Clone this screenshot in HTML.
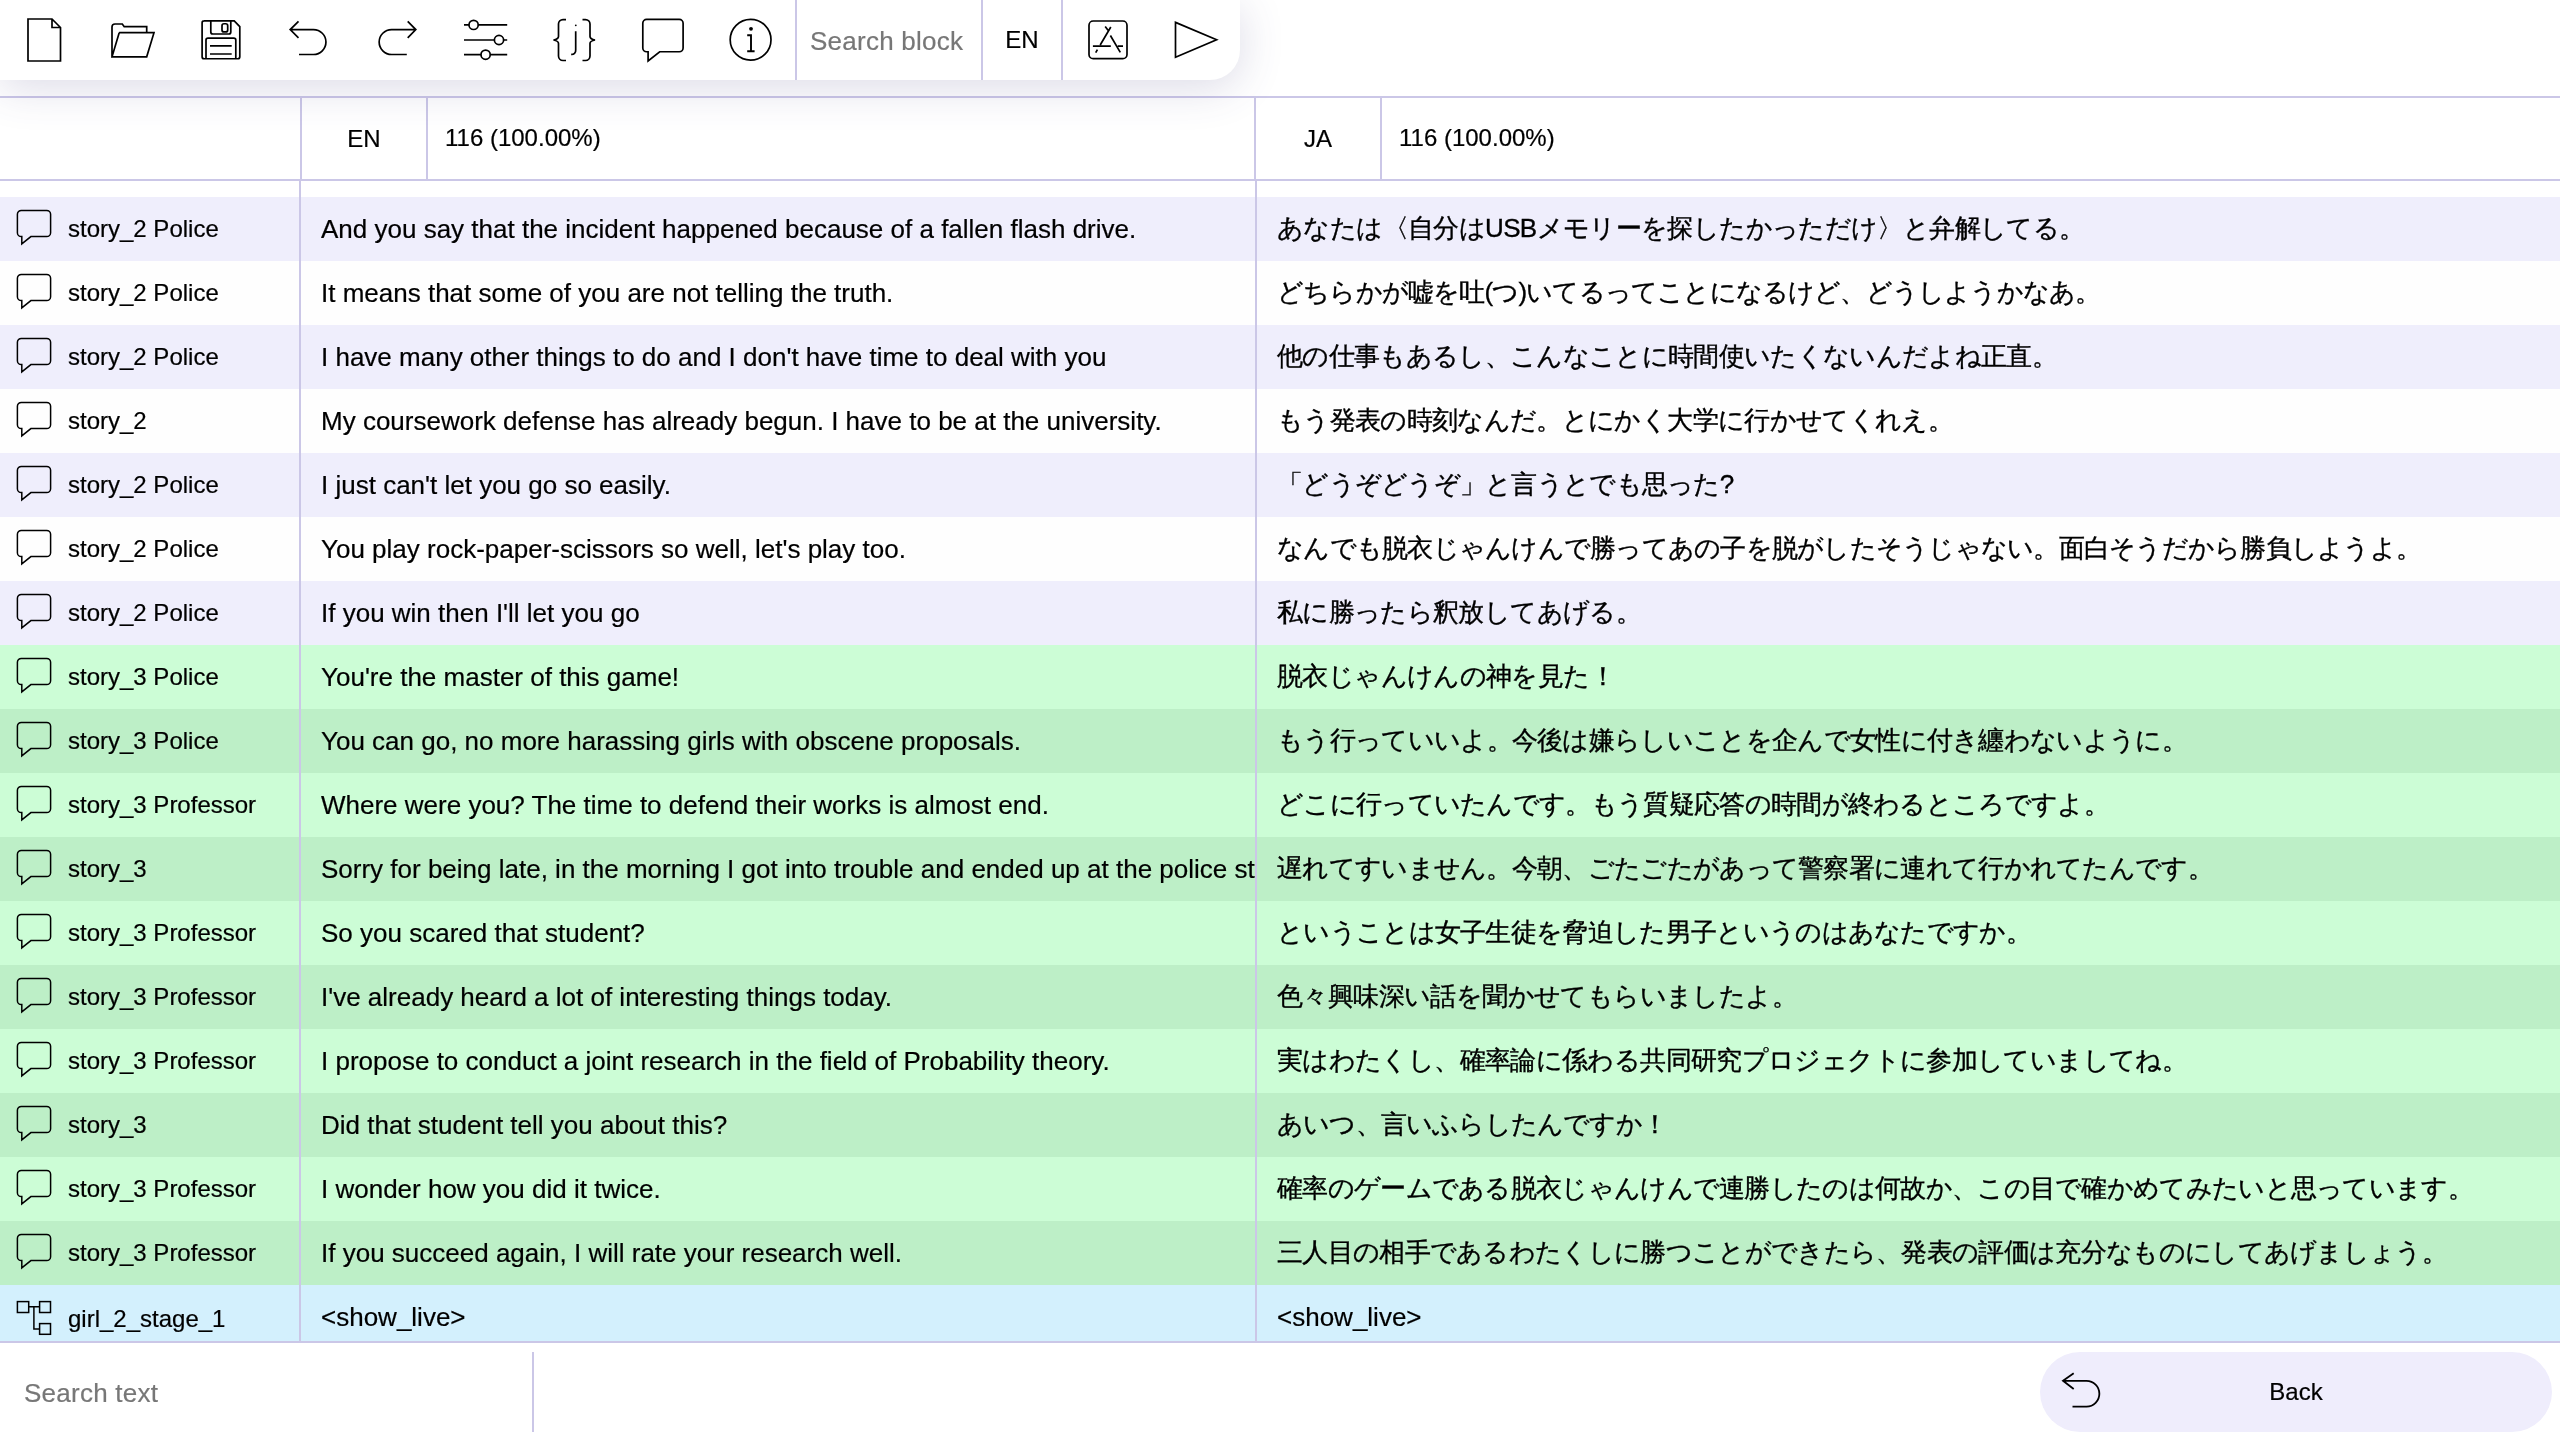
<!DOCTYPE html>
<html><head><meta charset="utf-8">
<style>
html,body{margin:0;padding:0}
body{will-change:transform;-webkit-text-stroke-width:0.2px;width:2560px;height:1440px;overflow:hidden;position:relative;background:#fff;font-family:"Liberation Sans",sans-serif;color:#000}
.a{position:absolute}
.hl{position:absolute;background:#cbc7e7}
#tb{position:absolute;left:0;top:0;width:1240px;height:80px;background:#fff;border-bottom-right-radius:30px;box-shadow:0 8px 44px rgba(70,62,125,0.19);z-index:5}
#tb svg{position:absolute;left:0;top:0}
.ph{color:#777;font-size:26px;white-space:nowrap;letter-spacing:0.25px}
#body{position:absolute;left:0;top:181px;width:2560px;height:1160px;overflow:hidden}
.row{position:absolute;left:0;width:2560px;height:64px}
.row .k{position:absolute;left:68px;top:0;line-height:64px;font-size:24px;white-space:nowrap}
.row .e{position:absolute;left:321px;top:0;width:934px;overflow:hidden;line-height:64px;font-size:26px;white-space:nowrap}
.row .j{position:absolute;left:1277px;top:-1px;-webkit-text-stroke-width:0.35px;line-height:64px;font-size:26px;white-space:nowrap}
.row svg{position:absolute;left:0;top:0}
.L{background:#efeefc}
.W{background:#fefefe}
.G1{background:#ccfdd6}
.G2{background:#bdefc7}
.B{background:#d3f0fd}
</style></head><body>

<!-- header lines -->
<div class="hl" style="left:0;top:96px;width:2560px;height:2px"></div>
<div class="hl" style="left:0;top:179px;width:2560px;height:2px"></div>
<div class="hl" style="left:300px;top:98px;width:2px;height:81px"></div>
<div class="hl" style="left:426px;top:98px;width:2px;height:81px"></div>
<div class="hl" style="left:1254px;top:98px;width:2px;height:81px"></div>
<div class="hl" style="left:1380px;top:98px;width:2px;height:81px"></div>
<div class="a" style="left:302px;top:98px;width:124px;line-height:81px;font-size:24px;text-align:center">EN</div>
<div class="a" style="left:445px;top:97px;line-height:81px;font-size:24px;white-space:nowrap">116 (100.00%)</div>
<div class="a" style="left:1256px;top:98px;width:124px;line-height:81px;font-size:24px;text-align:center">JA</div>
<div class="a" style="left:1399px;top:97px;line-height:81px;font-size:24px;white-space:nowrap">116 (100.00%)</div>

<div id="body">
<div class="row L" style="top:16px"><svg width="60" height="64" viewBox="0 0 60 64" fill="none" stroke="#000" stroke-width="1.5" stroke-linejoin="miter"><path d="M21.8 39.6H21.3A3.9 3.9 0 0 1 17.4 35.7V17.3A3.9 3.9 0 0 1 21.3 13.4H46.7A3.9 3.9 0 0 1 50.6 17.3V35.7A3.9 3.9 0 0 1 46.7 39.6H30.9L21.8 46.9Z"/></svg><div class="k">story_2 Police</div><div class="e">And you say that the incident happened because of a fallen flash drive.</div><div class="j" style="letter-spacing:-0.625px">あなたは〈自分はUSBメモリーを探したかっただけ〉と弁解してる。</div></div>
<div class="row W" style="top:80px"><svg width="60" height="64" viewBox="0 0 60 64" fill="none" stroke="#000" stroke-width="1.5" stroke-linejoin="miter"><path d="M21.8 39.6H21.3A3.9 3.9 0 0 1 17.4 35.7V17.3A3.9 3.9 0 0 1 21.3 13.4H46.7A3.9 3.9 0 0 1 50.6 17.3V35.7A3.9 3.9 0 0 1 46.7 39.6H30.9L21.8 46.9Z"/></svg><div class="k">story_2 Police</div><div class="e">It means that some of you are not telling the truth.</div><div class="j" style="letter-spacing:-0.819px">どちらかが嘘を吐(つ)いてるってことになるけど、どうしようかなあ。</div></div>
<div class="row L" style="top:144px"><svg width="60" height="64" viewBox="0 0 60 64" fill="none" stroke="#000" stroke-width="1.5" stroke-linejoin="miter"><path d="M21.8 39.6H21.3A3.9 3.9 0 0 1 17.4 35.7V17.3A3.9 3.9 0 0 1 21.3 13.4H46.7A3.9 3.9 0 0 1 50.6 17.3V35.7A3.9 3.9 0 0 1 46.7 39.6H30.9L21.8 46.9Z"/></svg><div class="k">story_2 Police</div><div class="e">I have many other things to do and I don't have time to deal with you</div><div class="j" style="letter-spacing:-0.667px">他の仕事もあるし、こんなことに時間使いたくないんだよね正直。</div></div>
<div class="row W" style="top:208px"><svg width="60" height="64" viewBox="0 0 60 64" fill="none" stroke="#000" stroke-width="1.5" stroke-linejoin="miter"><path d="M21.8 39.6H21.3A3.9 3.9 0 0 1 17.4 35.7V17.3A3.9 3.9 0 0 1 21.3 13.4H46.7A3.9 3.9 0 0 1 50.6 17.3V35.7A3.9 3.9 0 0 1 46.7 39.6H30.9L21.8 46.9Z"/></svg><div class="k">story_2</div><div class="e">My coursework defense has already begun. I have to be at the university.</div><div class="j" style="letter-spacing:-0.654px">もう発表の時刻なんだ。とにかく大学に行かせてくれえ。</div></div>
<div class="row L" style="top:272px"><svg width="60" height="64" viewBox="0 0 60 64" fill="none" stroke="#000" stroke-width="1.5" stroke-linejoin="miter"><path d="M21.8 39.6H21.3A3.9 3.9 0 0 1 17.4 35.7V17.3A3.9 3.9 0 0 1 21.3 13.4H46.7A3.9 3.9 0 0 1 50.6 17.3V35.7A3.9 3.9 0 0 1 46.7 39.6H30.9L21.8 46.9Z"/></svg><div class="k">story_2 Police</div><div class="e">I just can't let you go so easily.</div><div class="j" style="letter-spacing:-0.723px">「どうぞどうぞ」と言うとでも思った?</div></div>
<div class="row W" style="top:336px"><svg width="60" height="64" viewBox="0 0 60 64" fill="none" stroke="#000" stroke-width="1.5" stroke-linejoin="miter"><path d="M21.8 39.6H21.3A3.9 3.9 0 0 1 17.4 35.7V17.3A3.9 3.9 0 0 1 21.3 13.4H46.7A3.9 3.9 0 0 1 50.6 17.3V35.7A3.9 3.9 0 0 1 46.7 39.6H30.9L21.8 46.9Z"/></svg><div class="k">story_2 Police</div><div class="e">You play rock-paper-scissors so well, let's play too.</div><div class="j" style="letter-spacing:-0.75px">なんでも脱衣じゃんけんで勝ってあの子を脱がしたそうじゃない。面白そうだから勝負しようよ。</div></div>
<div class="row L" style="top:400px"><svg width="60" height="64" viewBox="0 0 60 64" fill="none" stroke="#000" stroke-width="1.5" stroke-linejoin="miter"><path d="M21.8 39.6H21.3A3.9 3.9 0 0 1 17.4 35.7V17.3A3.9 3.9 0 0 1 21.3 13.4H46.7A3.9 3.9 0 0 1 50.6 17.3V35.7A3.9 3.9 0 0 1 46.7 39.6H30.9L21.8 46.9Z"/></svg><div class="k">story_2 Police</div><div class="e">If you win then I'll let you go</div><div class="j" style="letter-spacing:-0.643px">私に勝ったら釈放してあげる。</div></div>
<div class="row G1" style="top:464px"><svg width="60" height="64" viewBox="0 0 60 64" fill="none" stroke="#000" stroke-width="1.5" stroke-linejoin="miter"><path d="M21.8 39.6H21.3A3.9 3.9 0 0 1 17.4 35.7V17.3A3.9 3.9 0 0 1 21.3 13.4H46.7A3.9 3.9 0 0 1 50.6 17.3V35.7A3.9 3.9 0 0 1 46.7 39.6H30.9L21.8 46.9Z"/></svg><div class="k">story_3 Police</div><div class="e">You're the master of this game!</div><div class="j" style="letter-spacing:-0.615px">脱衣じゃんけんの神を見た！</div></div>
<div class="row G2" style="top:528px"><svg width="60" height="64" viewBox="0 0 60 64" fill="none" stroke="#000" stroke-width="1.5" stroke-linejoin="miter"><path d="M21.8 39.6H21.3A3.9 3.9 0 0 1 17.4 35.7V17.3A3.9 3.9 0 0 1 21.3 13.4H46.7A3.9 3.9 0 0 1 50.6 17.3V35.7A3.9 3.9 0 0 1 46.7 39.6H30.9L21.8 46.9Z"/></svg><div class="k">story_3 Police</div><div class="e">You can go, no more harassing girls with obscene proposals.</div><div class="j" style="letter-spacing:-0.686px">もう行っていいよ。今後は嫌らしいことを企んで女性に付き纏わないように。</div></div>
<div class="row G1" style="top:592px"><svg width="60" height="64" viewBox="0 0 60 64" fill="none" stroke="#000" stroke-width="1.5" stroke-linejoin="miter"><path d="M21.8 39.6H21.3A3.9 3.9 0 0 1 17.4 35.7V17.3A3.9 3.9 0 0 1 21.3 13.4H46.7A3.9 3.9 0 0 1 50.6 17.3V35.7A3.9 3.9 0 0 1 46.7 39.6H30.9L21.8 46.9Z"/></svg><div class="k">story_3 Professor</div><div class="e">Where were you? The time to defend their works is almost end.</div><div class="j" style="letter-spacing:-0.688px">どこに行っていたんです。もう質疑応答の時間が終わるところですよ。</div></div>
<div class="row G2" style="top:656px"><svg width="60" height="64" viewBox="0 0 60 64" fill="none" stroke="#000" stroke-width="1.5" stroke-linejoin="miter"><path d="M21.8 39.6H21.3A3.9 3.9 0 0 1 17.4 35.7V17.3A3.9 3.9 0 0 1 21.3 13.4H46.7A3.9 3.9 0 0 1 50.6 17.3V35.7A3.9 3.9 0 0 1 46.7 39.6H30.9L21.8 46.9Z"/></svg><div class="k">story_3</div><div class="e">Sorry for being late, in the morning I got into trouble and ended up at the police station.</div><div class="j" style="letter-spacing:-0.694px">遅れてすいません。今朝、ごたごたがあって警察署に連れて行かれてたんです。</div></div>
<div class="row G1" style="top:720px"><svg width="60" height="64" viewBox="0 0 60 64" fill="none" stroke="#000" stroke-width="1.5" stroke-linejoin="miter"><path d="M21.8 39.6H21.3A3.9 3.9 0 0 1 17.4 35.7V17.3A3.9 3.9 0 0 1 21.3 13.4H46.7A3.9 3.9 0 0 1 50.6 17.3V35.7A3.9 3.9 0 0 1 46.7 39.6H30.9L21.8 46.9Z"/></svg><div class="k">story_3 Professor</div><div class="e">So you scared that student?</div><div class="j" style="letter-spacing:-0.69px">ということは女子生徒を脅迫した男子というのはあなたですか。</div></div>
<div class="row G2" style="top:784px"><svg width="60" height="64" viewBox="0 0 60 64" fill="none" stroke="#000" stroke-width="1.5" stroke-linejoin="miter"><path d="M21.8 39.6H21.3A3.9 3.9 0 0 1 17.4 35.7V17.3A3.9 3.9 0 0 1 21.3 13.4H46.7A3.9 3.9 0 0 1 50.6 17.3V35.7A3.9 3.9 0 0 1 46.7 39.6H30.9L21.8 46.9Z"/></svg><div class="k">story_3 Professor</div><div class="e">I've already heard a lot of interesting things today.</div><div class="j" style="letter-spacing:-0.6px">色々興味深い話を聞かせてもらいましたよ。</div></div>
<div class="row G1" style="top:848px"><svg width="60" height="64" viewBox="0 0 60 64" fill="none" stroke="#000" stroke-width="1.5" stroke-linejoin="miter"><path d="M21.8 39.6H21.3A3.9 3.9 0 0 1 17.4 35.7V17.3A3.9 3.9 0 0 1 21.3 13.4H46.7A3.9 3.9 0 0 1 50.6 17.3V35.7A3.9 3.9 0 0 1 46.7 39.6H30.9L21.8 46.9Z"/></svg><div class="k">story_3 Professor</div><div class="e">I propose to conduct a joint research in the field of Probability theory.</div><div class="j" style="letter-spacing:-0.629px">実はわたくし、確率論に係わる共同研究プロジェクトに参加していましてね。</div></div>
<div class="row G2" style="top:912px"><svg width="60" height="64" viewBox="0 0 60 64" fill="none" stroke="#000" stroke-width="1.5" stroke-linejoin="miter"><path d="M21.8 39.6H21.3A3.9 3.9 0 0 1 17.4 35.7V17.3A3.9 3.9 0 0 1 21.3 13.4H46.7A3.9 3.9 0 0 1 50.6 17.3V35.7A3.9 3.9 0 0 1 46.7 39.6H30.9L21.8 46.9Z"/></svg><div class="k">story_3</div><div class="e">Did that student tell you about this?</div><div class="j" style="letter-spacing:-0.8px">あいつ、言いふらしたんですか！</div></div>
<div class="row G1" style="top:976px"><svg width="60" height="64" viewBox="0 0 60 64" fill="none" stroke="#000" stroke-width="1.5" stroke-linejoin="miter"><path d="M21.8 39.6H21.3A3.9 3.9 0 0 1 17.4 35.7V17.3A3.9 3.9 0 0 1 21.3 13.4H46.7A3.9 3.9 0 0 1 50.6 17.3V35.7A3.9 3.9 0 0 1 46.7 39.6H30.9L21.8 46.9Z"/></svg><div class="k">story_3 Professor</div><div class="e">I wonder how you did it twice.</div><div class="j" style="letter-spacing:-0.696px">確率のゲームである脱衣じゃんけんで連勝したのは何故か、この目で確かめてみたいと思っています。</div></div>
<div class="row G2" style="top:1040px"><svg width="60" height="64" viewBox="0 0 60 64" fill="none" stroke="#000" stroke-width="1.5" stroke-linejoin="miter"><path d="M21.8 39.6H21.3A3.9 3.9 0 0 1 17.4 35.7V17.3A3.9 3.9 0 0 1 21.3 13.4H46.7A3.9 3.9 0 0 1 50.6 17.3V35.7A3.9 3.9 0 0 1 46.7 39.6H30.9L21.8 46.9Z"/></svg><div class="k">story_3 Professor</div><div class="e">If you succeed again, I will rate your research well.</div><div class="j" style="letter-spacing:-0.689px">三人目の相手であるわたくしに勝つことができたら、発表の評価は充分なものにしてあげましょう。</div></div>
<div class="row B" style="top:1104px"><svg width="60" height="64" viewBox="0 0 60 64" fill="none" stroke="#000" stroke-width="1.5"><rect x="17.4" y="16.6" width="11.3" height="10.9"/><rect x="39.6" y="16.6" width="10.9" height="10.9"/><rect x="39.6" y="38.6" width="10.9" height="10.7"/><path d="M28.7 21.8H39.6M33.9 21.8V43.9H39.6"/></svg><div class="k" style="top:2px">girl_2_stage_1</div><div class="e">&lt;show_live&gt;</div><div class="j" style="-webkit-text-stroke-width:0.2px;top:0">&lt;show_live&gt;</div></div>
<div class="hl" style="left:299px;top:0;width:2px;height:1160px"></div>
<div class="hl" style="left:1255px;top:0;width:2px;height:1160px"></div>
</div>
<div class="hl" style="left:0;top:1341px;width:2560px;height:2px"></div>

<!-- bottom bar -->
<div class="a ph" style="left:24px;top:1353px;line-height:80px">Search text</div>
<div class="hl" style="left:532px;top:1352px;width:2px;height:80px"></div>
<div class="a" style="left:2040px;top:1352px;width:512px;height:80px;border-radius:40px;background:#efedfc"></div>
<div class="a" style="left:2040px;top:1352px;width:512px;line-height:80px;font-size:24px;text-align:center">Back</div>
<svg class="a" style="left:0;top:0" width="2560" height="1440" viewBox="0 0 2560 1440" fill="none" stroke="#000" stroke-width="1.8">
<path d="M2072.5 1406.6H2086.5A12.9 12.9 0 0 0 2086.5 1380.8H2063M2073.7 1373.2L2063 1380.8L2073.7 1389"/>
</svg>

<!-- toolbar -->
<div id="tb">
<svg width="1240" height="80" viewBox="0 0 1240 80" fill="none" stroke="#000" stroke-width="1.7" stroke-linejoin="miter">
<path d="M28 19H52L60.5 27.5V61H28Z M52 19V27.5H60.5"/>
<path d="M112 56.8V27A3 3 0 0 1 115 24H122.3L124.2 26.7H146.7V32.6 M119.2 32.7H154L146.7 56.8H112L119.2 32.7"/>
<path d="M204 20.9H234.2L239.8 26.7V56.75A2 2 0 0 1 237.8 58.75H204.1A2 2 0 0 1 202.1 56.75V22.9A2 2 0 0 1 204.1 20.9Z"/>
<path d="M210.8 20.9V32A2 2 0 0 0 212.8 34H228.8A2 2 0 0 0 230.8 32V20.9"/>
<rect x="222" y="23.75" width="5.7" height="8.15" rx="2"/>
<path d="M206 58.75V40.1A2 2 0 0 1 208 38.1H233.8A2 2 0 0 1 235.8 40.1V58.75 M210 45.8H231.7 M210 54H231.7"/>
<path d="M299 54.5H313.5A12.45 12.45 0 0 0 313.5 29.6H290 M298.5 21.4L290.2 29.6L298.5 37.8"/>
<path d="M406.8 54.5H391.6A12.45 12.45 0 0 1 391.6 29.6H415.6 M407.7 21.4L415.8 29.6L407.7 37.8"/>
<path d="M464 24.9H469 M478.2 24.9H507.2 M464 40H494.4 M503.6 40H507.2 M464 54.7H481 M490.2 54.7H507.2"/>
<circle cx="473.6" cy="24.9" r="4.6"/><circle cx="499" cy="40" r="4.6"/><circle cx="485.6" cy="54.7" r="4.6"/>
<path d="M566 19.6H563A4.5 4.5 0 0 0 558.5 24.1V36.5Q558.5 39 553.5 40Q558.5 41 558.5 43.5V56A4.5 4.5 0 0 0 563 60.5H566"/>
<path d="M582.5 19.6H585.5A4.5 4.5 0 0 1 590 24.1V36.5Q590 39 595 40Q590 41 590 43.5V56A4.5 4.5 0 0 1 585.5 60.5H582.5"/>
<path d="M575.7 31.3V50A4 4 0 0 1 571.2 54.4"/>
<circle cx="575.8" cy="25.3" r="0.9" fill="#000" stroke="none"/>
<path d="M648.1 51.75H646.6A3.8 3.8 0 0 1 642.8 47.95V23.2A3.8 3.8 0 0 1 646.6 19.4H679.3A3.8 3.8 0 0 1 683.1 23.2V47.95A3.8 3.8 0 0 1 679.3 51.75H659.7L648.1 60.9Z"/>
<circle cx="750.6" cy="39.7" r="20.4"/>
<path d="M747.2 35.3H751V51.2 M747.2 51.2H754.6" stroke-width="1.9"/>
<circle cx="751" cy="28.8" r="1.9" fill="#000" stroke="none"/>
<rect x="1089" y="21" width="38" height="37.7" rx="4.2"/>
<path d="M1092.9 46.1H1110.8 M1117.8 46.1H1123 M1100.2 45L1110.8 27 M1105.2 26.6L1108 30.2 M1110.4 35.5L1120.3 52.4 M1097.4 49.6L1095.7 52.7"/>
<path d="M1175.5 22.4L1216.6 39.8L1175.5 57.3Z"/>
</svg>
<div class="hl" style="left:795px;top:0;width:2px;height:80px"></div>
<div class="hl" style="left:981px;top:0;width:2px;height:80px"></div>
<div class="hl" style="left:1061px;top:0;width:2px;height:80px"></div>
<div class="a ph" style="left:810px;top:1px;line-height:80px">Search block</div>
<div class="a" style="left:983px;top:0;width:78px;line-height:80px;font-size:24px;text-align:center">EN</div>

</div>
</body></html>
